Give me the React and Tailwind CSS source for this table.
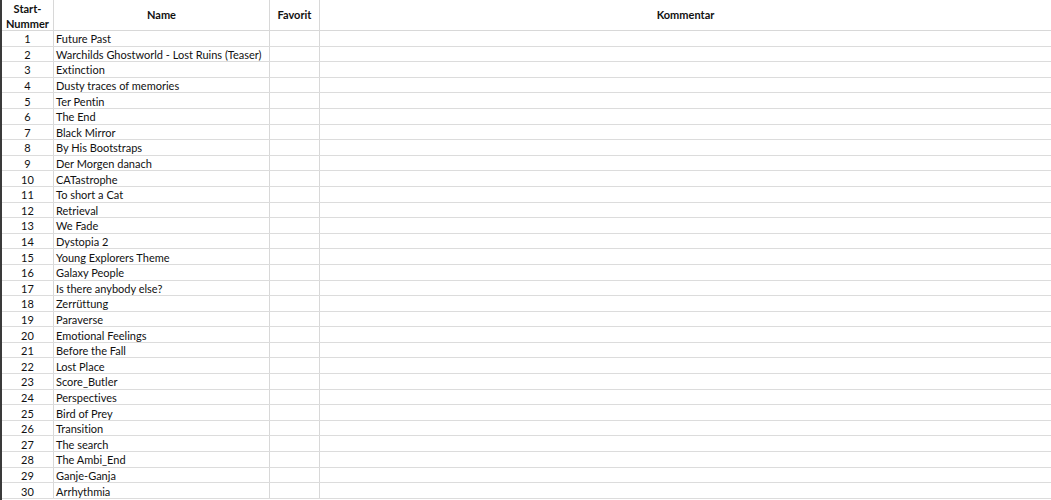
import React from "react";

const names = [
  "Future Past",
  "Warchilds Ghostworld - Lost Ruins (Teaser)",
  "Extinction",
  "Dusty traces of memories",
  "Ter Pentin",
  "The End",
  "Black Mirror",
  "By His Bootstraps",
  "Der Morgen danach",
  "CATastrophe",
  "To short a Cat",
  "Retrieval",
  "We Fade",
  "Dystopia 2",
  "Young Explorers Theme",
  "Galaxy People",
  "Is there anybody else?",
  "Zerrüttung",
  "Paraverse",
  "Emotional Feelings",
  "Before the Fall",
  "Lost Place",
  "Score_Butler",
  "Perspectives",
  "Bird of Prey",
  "Transition",
  "The search",
  "The Ambi_End",
  "Ganje-Ganja",
  "Arrhythmia",
];

export default function App() {
  return (
    <div
      className="w-[1051px] h-[500px] overflow-hidden bg-white text-[#111] flex [font-variant-ligatures:none]"
      style={{ fontFamily: "Lato, 'Liberation Sans', sans-serif" }}
    >
      <div className="w-[2px] shrink-0 bg-[#3a3a3a]" />
      <div className="flex-1 flex flex-col text-[11px]">
        <div className="flex h-[31px] shrink-0 border-b border-[#d8d8d8] font-bold">
          <div className="w-[52px] shrink-0 border-r border-[#d8d8d8] flex flex-col items-center justify-center leading-[15px] pt-[1px]">
            <span>Start-</span>
            <span>Nummer</span>
          </div>
          <div className="w-[216px] shrink-0 border-r border-[#d8d8d8] flex items-center justify-center pt-[1px]">
            Name
          </div>
          <div className="w-[50px] shrink-0 border-r border-[#d8d8d8] flex items-center justify-center pt-[1px]">
            Favorit
          </div>
          <div className="w-[731px] shrink-0 flex items-center justify-center pt-[1px]">
            Kommentar
          </div>
        </div>
        {names.map((n, i) => (
          <div key={i} className="flex h-[15.6px] shrink-0 border-b border-[#dcdcdc] leading-none">
            <div className="w-[52px] shrink-0 border-r border-[#d8d8d8] flex items-center justify-center pt-[1px]">
              {i + 1}
            </div>
            <div className="w-[216px] shrink-0 border-r border-[#d8d8d8] flex items-center pl-[2px] pt-[1px] whitespace-nowrap">
              {n}
            </div>
            <div className="w-[50px] shrink-0 border-r border-[#d8d8d8]" />
            <div className="w-[731px] shrink-0" />
          </div>
        ))}
      </div>
    </div>
  );
}
